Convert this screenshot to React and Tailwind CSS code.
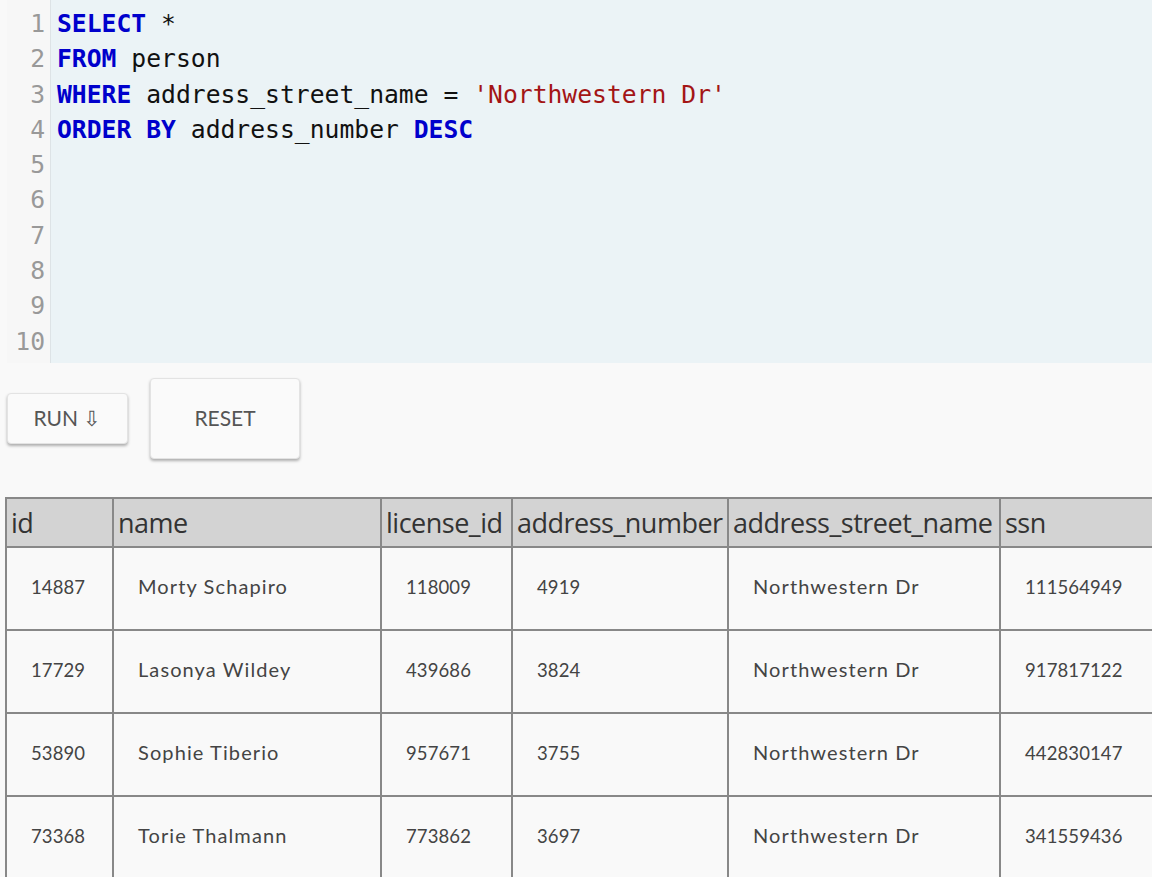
import React from "react";

const lines = [
  [["kw", "SELECT"], ["tx", " *"]],
  [["kw", "FROM"], ["tx", " person"]],
  [["kw", "WHERE"], ["tx", " address_street_name = "], ["str", "'Northwestern Dr'"]],
  [["kw", "ORDER BY"], ["tx", " address_number "], ["kw", "DESC"]],
  [],
  [],
  [],
  [],
  [],
  [],
];

const cols = [
  { key: "id", w: "w-[107px]" },
  { key: "name", w: "w-[268px]" },
  { key: "license_id", w: "w-[131px]" },
  { key: "address_number", w: "w-[216px]" },
  { key: "address_street_name", w: "w-[272px]" },
  { key: "ssn", w: "w-[160px]" },
];

const rows = [
  ["14887", "Morty Schapiro", "118009", "4919", "Northwestern Dr", "111564949"],
  ["17729", "Lasonya Wildey", "439686", "3824", "Northwestern Dr", "917817122"],
  ["53890", "Sophie Tiberio", "957671", "3755", "Northwestern Dr", "442830147"],
  ["73368", "Torie Thalmann", "773862", "3697", "Northwestern Dr", "341559436"],
];

const tokenClass = {
  kw: "text-[#0000cc] font-bold",
  tx: "text-[#111]",
  str: "text-[#a31515]",
};

export default function App() {
  return (
    <div className="min-h-screen bg-[#f9f9f9] overflow-hidden w-[1152px] h-[877px]">
      {/* editor */}
      <div className="flex h-[363px] ml-[7px] font-['DejaVu_Sans_Mono',monospace] text-[24.7px]">
        <div className="w-[44px] bg-[#f7f7f7] border-r border-[#dde3e6] pt-[6px] text-right pr-[5px] text-[#999]">
          {lines.map((_, i) => (
            <div key={i} className="h-[35.3px] leading-[35.3px]">{i + 1}</div>
          ))}
        </div>
        <div className="flex-1 bg-[#ebf3f6] pt-[6px] pl-[6px] whitespace-pre">
          {lines.map((toks, i) => (
            <div key={i} className="h-[35.3px] leading-[35.3px]">
              {toks.map(([t, s], j) => (
                <span key={j} className={tokenClass[t]}>{s}</span>
              ))}
            </div>
          ))}
        </div>
      </div>

      {/* buttons */}
      <div className="flex items-start gap-[22px] ml-[7px] mt-[15px] font-['Lato',sans-serif] text-[#555] text-[21px]">
        <button className="mt-[15px] w-[121px] h-[51px] rounded-[4px] bg-[#fafafa] border border-[#e3e3e3] shadow-[0_2px_3px_rgba(0,0,0,0.3)] pb-[2px]">
          RUN ⇩
        </button>
        <button className="w-[150px] h-[81px] rounded-[4px] bg-[#fafafa] border border-[#e3e3e3] shadow-[0_2px_3px_rgba(0,0,0,0.3)] pb-[2px]">
          RESET
        </button>
      </div>

      {/* results */}
      <table className="mt-[38px] ml-[5px] border-collapse table-fixed w-[1154px]">
        <thead>
          <tr className="bg-[#d3d3d3] h-[49px]">
            {cols.map((c) => (
              <th
                key={c.key}
                className={`${c.w} border-2 border-[#888] text-left font-normal px-[4px] text-[27px] leading-[30px] text-[#333] font-['Open_Sans',sans-serif] tracking-[-0.5px] whitespace-nowrap`}
              >
                {c.key}
              </th>
            ))}
          </tr>
        </thead>
        <tbody className="font-['Lato',sans-serif] text-[#444]">
          {rows.map((r, i) => (
            <tr key={i} className="h-[83px]">
              {r.map((v, j) => (
                <td
                  key={j}
                  className={`border-2 border-[#888] px-[24px] pt-[26px] align-baseline leading-[24px] ${
                    /^\d+$/.test(v) ? "text-[18.5px] tracking-[0.1px]" : "text-[20px] tracking-[1.1px]"
                  }`}
                >
                  {v}
                </td>
              ))}
            </tr>
          ))}
        </tbody>
      </table>
    </div>
  );
}
